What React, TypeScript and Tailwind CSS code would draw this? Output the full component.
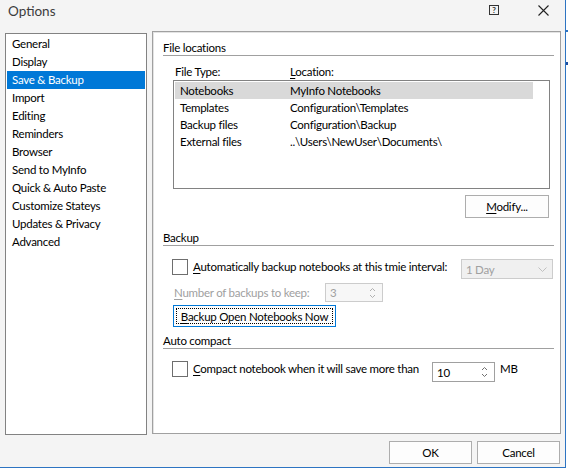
import React from "react";

const font = { fontFamily: 'Lato, "Noto Sans", sans-serif' };

function U({ c }: { c: string }) {
  return <span className="underline underline-offset-[2px] decoration-[1px]">{c}</span>;
}

function SectionHeader({ children }: { children: React.ReactNode }) {
  return (
    <div className="border-b border-[#a0a0a0] leading-[15px] text-black h-[16px]">
      {children}
    </div>
  );
}

function Checkbox() {
  return <div className="w-[16px] h-[16px] border border-[#6e6e6e] bg-white shrink-0" />;
}

function SpinArrows({ color }: { color: string }) {
  return (
    <svg width="7" height="14" viewBox="0 0 7 14" className="shrink-0">
      <path d="M1 5 L3.5 2.5 L6 5" fill="none" stroke={color} strokeWidth="1" />
      <path d="M1 9 L3.5 11.5 L6 9" fill="none" stroke={color} strokeWidth="1" />
    </svg>
  );
}

const navItems = [
  "General",
  "Display",
  "Save & Backup",
  "Import",
  "Editing",
  "Reminders",
  "Browser",
  "Send to MyInfo",
  "Quick & Auto Paste",
  "Customize Stateys",
  "Updates & Privacy",
  "Advanced",
];

const files = [
  ["Notebooks", "MyInfo Notebooks"],
  ["Templates", "Configuration\\Templates"],
  ["Backup files", "Configuration\\Backup"],
  ["External files", "..\\Users\\NewUser\\Documents\\"],
];

export default function App() {
  return (
    <div
      className="w-[568px] h-[469px] bg-white flex overflow-hidden text-[11.5px] tracking-[-0.25px]"
      style={font}
    >
      <div className="w-[566px] h-[468px] shrink-0 bg-[#f4f4f4] border-r border-b border-[#2d74c2] flex flex-col">
        {/* Title bar */}
        <div className="h-[31px] flex items-start shrink-0">
          <div className="pl-[8px] pt-[1px] text-[13.5px] tracking-[0px] leading-[20px] text-[#3c3c3c]">Options</div>
          <div className="ml-auto flex items-start pt-[5px]">
            <div className="w-[10px] h-[10px] border border-[#333] flex items-center justify-center text-[8px] leading-[8px] font-bold text-[#333] mr-[39px] tracking-[0px]">
              ?
            </div>
            <svg width="11" height="11" viewBox="0 0 11 11" className="mr-[16px]">
              <path d="M0.5 0.5 L10.5 10.5 M10.5 0.5 L0.5 10.5" stroke="#222" strokeWidth="1.1" />
            </svg>
          </div>
        </div>

        {/* Body */}
        <div className="flex pl-[5px] gap-[5px] shrink-0">
          {/* Nav list */}
          <div className="w-[142px] h-[402px] mt-[2px] border border-[#828282] bg-white p-[1px] pt-[1px]">
            {navItems.map((n) => (
              <div
                key={n}
                className={
                  "h-[18px] pl-[5px] leading-[18px] whitespace-nowrap " +
                  (n === "Save & Backup" ? "bg-[#0078d7] text-white" : "text-black")
                }
              >
                {n}
              </div>
            ))}
          </div>

          {/* Right panel */}
          <div className="w-[409px] h-[403px] border border-[#a0a0a0] bg-white shadow-[inset_1px_1px_0_#e3e3e3] pl-[10px] pr-[6px] pt-[8px] text-black">
            <SectionHeader>File locations</SectionHeader>

            <div className="mt-[8px] flex h-[16px] leading-[16px] pl-[12px]">
              <div className="w-[115px]">File Type:</div>
              <div>
                <U c="L" />ocation:
              </div>
            </div>

            <div className="ml-[10px] w-[377px] h-[109px] border border-[#828282] bg-white pt-[1px] pl-[1px]">
              {files.map(([a, b], i) => (
                <div
                  key={a}
                  className={
                    "w-[358px] h-[17px] leading-[17px] flex pl-[5px] whitespace-nowrap " +
                    (i === 0 ? "bg-[#d9d9d9]" : "")
                  }
                >
                  <div className="w-[110px]">{a}</div>
                  <div>{b}</div>
                </div>
              ))}
            </div>

            <div className="ml-[10px] w-[377px] flex justify-end mt-[6px]">
              <div className="w-[84px] h-[23px] mr-[1px] border border-[#adadad] bg-[#fdfdfd] flex items-center justify-center leading-[16px]">
                <span>
                  <U c="M" />odify...
                </span>
              </div>
            </div>

            <div className="mt-[12px]">
              <SectionHeader>Backup</SectionHeader>
            </div>

            <div className="mt-[13px] flex items-start h-[20px]">
              <div className="ml-[9px]">
                <Checkbox />
              </div>
              <div className="ml-[5px] leading-[15px] whitespace-nowrap">
                <U c="A" />utomatically backup notebooks at this tmie interval:
              </div>
              <div className="ml-auto mr-[1px] w-[92px] h-[20px] border border-[#cccccc] bg-[#f0f0f0] flex items-center pl-[4px] pr-[5px] text-[#a0a0a0]">
                <span className="leading-[16px] mt-[1px]">1 Day</span>
                <svg width="9" height="5" viewBox="0 0 9 5" className="ml-auto">
                  <path d="M0.5 0.5 L4.5 4.5 L8.5 0.5" fill="none" stroke="#c0c0c0" strokeWidth="1" />
                </svg>
              </div>
            </div>

            <div className="mt-[4px] flex items-center h-[19px]">
              <div className="ml-[11px] w-[151px] text-[#a0a0a0] whitespace-nowrap leading-[16px]">
                <U c="N" />umber of backups to keep:
              </div>
              <div className="w-[58px] h-[19px] border border-[#cccccc] bg-[#f7f7f7] flex items-center pl-[4px] pr-[6px] text-[#a0a0a0]">
                <span className="leading-[16px] mt-[1px]">3</span>
                <div className="ml-auto">
                  <SpinArrows color="#b0b0b0" />
                </div>
              </div>
            </div>

            <div className="mt-[3px] ml-[10px] w-[163px] h-[22px] border border-[#0078d7] bg-[#fdfdfd] p-[2px]">
              <div className="w-full h-full border border-dotted border-black flex items-center justify-center leading-[15px] whitespace-nowrap">
                <span>
                  <U c="B" />ackup Open Notebooks Now
                </span>
              </div>
            </div>

            <div className="mt-[6px]">
              <SectionHeader>Auto compact</SectionHeader>
            </div>

            <div className="mt-[12px] flex items-start h-[20px]">
              <div className="ml-[9px]">
                <Checkbox />
              </div>
              <div className="ml-[5px] w-[239px] leading-[15px] whitespace-nowrap">
                <U c="C" />ompact notebook when it will save more than
              </div>
              <div className="mt-[1px] w-[63px] h-[20px] border border-[#a0a0a0] bg-white flex items-center pl-[4px] pr-[6px]">
                <span className="leading-[16px] mt-[2px]">10</span>
                <div className="ml-auto">
                  <SpinArrows color="#707070" />
                </div>
              </div>
              <div className="ml-[5px] leading-[15px]">MB</div>
            </div>
          </div>
        </div>

        {/* Footer */}
        <div className="flex justify-end gap-[5px] pr-[5px] mt-[6px]">
          <div className="w-[83px] h-[23px] border border-[#adadad] bg-[#fdfdfd] flex items-center justify-center">OK</div>
          <div className="w-[83px] h-[23px] border border-[#adadad] bg-[#fdfdfd] flex items-center justify-center">Cancel</div>
        </div>
      </div>
      <div className="flex-1 h-[468px] bg-white flex flex-col">
        <div className="h-[30px]" />
        <div className="h-[2px] bg-[#2d74c2]" />
        <div className="h-[30px]" />
        <div className="h-[3px] bg-[#1d4ea0]" />
      </div>
    </div>
  );
}
